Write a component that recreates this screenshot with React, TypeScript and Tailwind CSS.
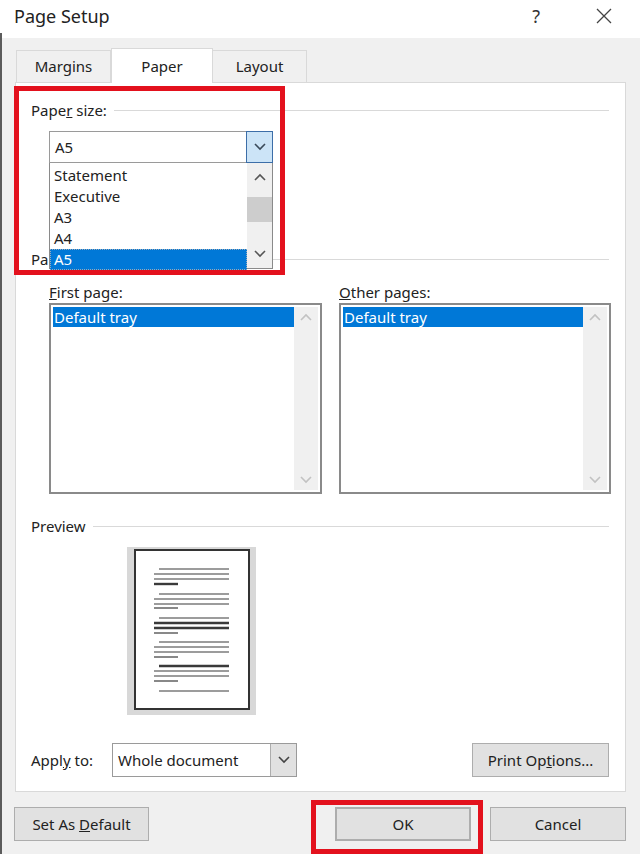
import React from "react";

const FONT = { fontFamily: "'Noto Sans', 'Open Sans', 'Liberation Sans', sans-serif" };

function Chevron({ up = false, className = "" }: { up?: boolean; className?: string }) {
    return (
        <svg width="12" height="8" viewBox="0 0 12 8" className={className}>
            <path
                d={up ? "M1 7 L6 2 L11 7" : "M1 1 L6 6 L11 1"}
                fill="none"
                stroke="currentColor"
                strokeWidth="1.6"
            />
        </svg>
    );
}

function GroupHeader({ children }: { children: React.ReactNode }) {
    return (
        <div className="flex items-center pr-[16px]">
            <span className="text-[15px] leading-5 text-[#222]">{children}</span>
            <div className="flex-1 h-px bg-[#d9d9d9] ml-[7px]" />
        </div>
    );
}

function TrayList({ label }: { label: React.ReactNode }) {
    return (
        <div className="flex flex-col">
            <div className="text-[15px] leading-5 text-[#222] h-[21px]">{label}</div>
            <div className="h-[191px] border-2 border-[#8a8a8a] bg-white flex p-[2px]">
                <div className="flex-1">
                    <div className="h-[20px] bg-[#0078d7] text-white text-[15px] leading-5 pl-[1px]">Default tray</div>
                </div>
                <div className="w-[24px] bg-[#f0f0f0] flex flex-col items-center justify-between py-[6px] text-[#c2c2c2]">
                    <Chevron up />
                    <Chevron />
                </div>
            </div>
        </div>
    );
}

function PreviewPage() {
    const lines: [number, number, number, number][] = [
        // y, x1, x2, thickness
        [20, 25, 95, 1.2], [25, 20, 95, 1.2], [30, 20, 95, 1.2], [35, 20, 44, 2.4],
        [45, 25, 95, 1.2], [50, 20, 95, 1.2], [55, 20, 95, 1.2], [59, 20, 44, 1.2],
        [69, 25, 95, 1.2], [74, 20, 95, 2.4], [79, 20, 95, 2.4], [84, 20, 44, 1.2],
        [93, 25, 95, 1.2], [98, 20, 95, 1.2], [103, 20, 95, 1.2], [108, 20, 44, 1.2],
        [117, 25, 95, 2.4], [122, 20, 95, 1.2], [127, 20, 95, 1.2], [132, 20, 44, 1.2],
        [142, 25, 95, 1.2],
    ];
    return (
        <div className="w-[129px] h-[168px] bg-[#d8d8d8] pl-[7px] pt-[2px]">
            <svg width="116" height="161" viewBox="0 0 116 161" className="block">
                <rect x="1" y="1" width="114" height="159" fill="#fff" stroke="#333" strokeWidth="2" />
                {lines.map(([y, x1, x2, t], i) => (
                    <line key={i} x1={x1} x2={x2} y1={y} y2={y} stroke="#3a3a3a" strokeWidth={t} />
                ))}
            </svg>
        </div>
    );
}

function Button({ children, className = "" }: { children: React.ReactNode; className?: string }) {
    return (
        <div
            className={`h-[34px] bg-[#e1e1e1] border border-[#adadad] flex items-center justify-center text-[15px] text-[#222] ${className}`}
        >
            {children}
        </div>
    );
}

export default function App() {
    return (
        <div className="w-[640px] h-[854px] bg-[#f0f0f0] relative overflow-hidden" style={FONT}>
            {/* Title bar */}
            <div className="h-[38px] bg-white flex items-center pl-[14px] pr-[28px]">
                <span className="text-[18px] text-[#222] flex-1 -mt-[6px]">Page Setup</span>
                <span className="text-[18px] text-[#333] mr-[56px] -mt-[6px]">?</span>
                <svg width="16" height="16" viewBox="0 0 16 16" className="-mt-[6px]">
                    <path d="M1 1 L15 15 M15 1 L1 15" stroke="#444" strokeWidth="1.3" />
                </svg>
            </div>

            <div className="absolute left-0 top-[33px] bottom-0 w-[2px] bg-[#5c5c5c]" />

            {/* Tabs */}
            <div className="flex items-end pl-[16px] h-[44px]">
                <div className="w-[95px] h-[32px] bg-[#f0f0f0] border border-b-0 border-[#d9d9d9] flex items-center justify-center text-[15px] text-[#222]">
                    Margins
                </div>
                <div className="w-[102px] h-[35px] bg-white border border-b-0 border-[#d9d9d9] flex items-center justify-center text-[15px] text-[#222] relative z-10 -mb-px">
                    Paper
                </div>
                <div className="w-[94px] h-[32px] bg-[#f0f0f0] border border-b-0 border-l-0 border-[#d9d9d9] flex items-center justify-center text-[15px] text-[#222]">
                    Layout
                </div>
            </div>

            {/* Tab panel */}
            <div className="ml-[15px] w-[611px] h-[710px] bg-white border border-[#d9d9d9] relative pl-[15px] pt-[17px]">
                <GroupHeader>
                    Pape<u>r</u> size:
                </GroupHeader>

                <div className="ml-[18px] mt-[11px] w-[224px] h-[32px] border border-[#9a9a9a] bg-white flex">
                    <div className="flex-1 flex items-center pl-[5px] text-[15px] text-[#222]">A5</div>
                    <div className="w-[27px] bg-[#cce4f7] border border-[#3c6ea8] flex items-center justify-center text-[#3a4a5a] -my-px -mr-px">
                        <Chevron />
                    </div>
                </div>

                <div className="mt-[86px] flex items-center pr-[16px]">
                    <span className="text-[15px] leading-5 text-[#222] w-[18px] overflow-hidden whitespace-nowrap">Paper source</span>
                    <div className="flex-1 h-px bg-[#d9d9d9] ml-[100px]" />
                </div>

                {/* Open dropdown list */}
                <div className="absolute left-[33px] top-[80px] w-[224px] h-[106px] bg-white border border-[#8a8a8a] border-t-0 flex z-10">
                    <div className="flex-1 flex flex-col text-[15px] text-[#222] leading-[21px] pt-[2px]">
                        <div className="pl-[4px]">Statement</div>
                        <div className="pl-[4px]">Executive</div>
                        <div className="pl-[4px]">A3</div>
                        <div className="pl-[4px]">A4</div>
                        <div className="pl-[4px] bg-[#0078d7] text-white outline outline-1 outline-dotted outline-[#9ab] -outline-offset-1">A5</div>
                    </div>
                    <div className="w-[25px] bg-[#f0f0f0] flex flex-col items-center py-[10px] text-[#555]">
                        <Chevron up />
                        <div className="w-full h-[25px] bg-[#cdcdcd] mt-[16px]" />
                        <div className="flex-1" />
                        <Chevron />
                    </div>
                </div>

                <div className="flex mt-[13px] ml-[18px] gap-[17px]">
                    <div className="w-[273px]">
                        <TrayList label={<><u>F</u>irst page:</>} />
                    </div>
                    <div className="w-[272px]">
                        <TrayList label={<><u>O</u>ther pages:</>} />
                    </div>
                </div>

                <div className="mt-[22px]">
                    <GroupHeader>Preview</GroupHeader>
                </div>

                <div className="ml-[96px] mt-[11px]">
                    <PreviewPage />
                </div>

                <div className="flex items-center mt-[28px] pr-[16px]">
                    <span className="text-[15px] text-[#222] w-[81px]">
                        Appl<u>y</u> to:
                    </span>
                    <div className="w-[185px] h-[34px] border border-[#9a9a9a] bg-white flex">
                        <div className="flex-1 flex items-center pl-[5px] text-[15px] text-[#222]">Whole document</div>
                        <div className="w-[26px] bg-[#e1e1e1] border-l border-[#adadad] flex items-center justify-center text-[#444]">
                            <Chevron />
                        </div>
                    </div>
                    <div className="flex-1" />
                    <Button className="w-[137px]">
                        Print Op<u>t</u>ions...
                    </Button>
                </div>
            </div>

            {/* Bottom buttons */}
            <div className="flex items-center mt-[15px] pl-[14px] pr-[14px]">
                <Button className="w-[135px]">
                    Set As&nbsp;<u>D</u>efault
                </Button>
                <div className="flex-1" />
                <Button className="w-[136px] border-2 border-[#0078d7]">OK</Button>
                <Button className="w-[136px] ml-[19px]">Cancel</Button>
            </div>

            {/* Red highlight annotations */}
            <div className="absolute left-[14px] top-[86px] w-[271px] h-[189px] border-[5px] border-[#e3111d] z-20 pointer-events-none" />
            <div className="absolute left-[311px] top-[800px] w-[172px] h-[54px] border-[5px] border-[#e3111d] z-20 pointer-events-none" />
        </div>
    );
}
